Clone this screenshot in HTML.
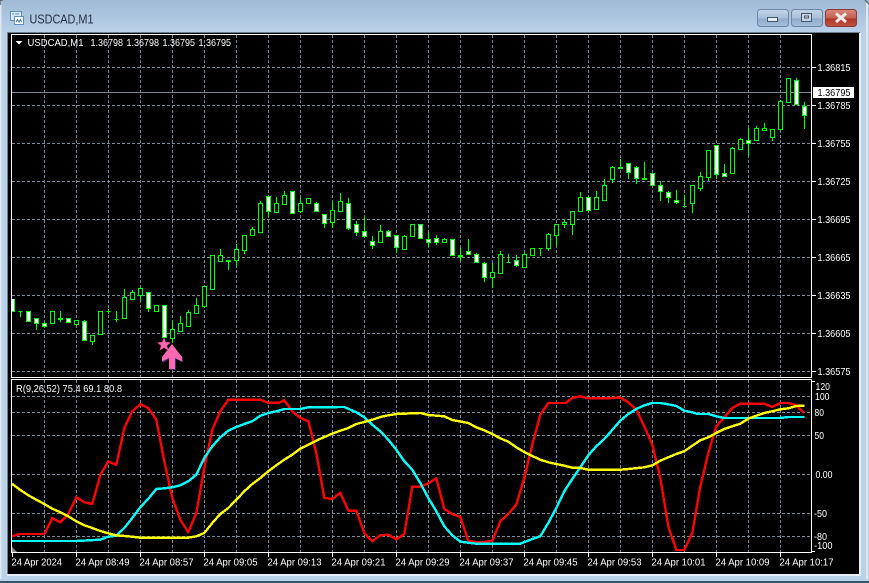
<!DOCTYPE html>
<html>
<head>
<meta charset="utf-8">
<title>USDCAD,M1</title>
<style>
html,body{margin:0;padding:0;background:#b9d2ea;}
svg{display:block;}
text{font-family:"Liberation Sans",sans-serif;font-size:10.5px;fill:#fff;}
</style>
</head>
<body>
<svg xmlns="http://www.w3.org/2000/svg" width="869" height="583" viewBox="0 0 869 583">
<defs>
<linearGradient id="tb" x1="0" y1="0" x2="0" y2="1"><stop offset="0" stop-color="#a0bad6"/><stop offset="1" stop-color="#bad2e9"/></linearGradient>
<linearGradient id="btn" x1="0" y1="0" x2="0" y2="1"><stop offset="0" stop-color="#c3d5e8"/><stop offset=".5" stop-color="#a9c0da"/><stop offset=".55" stop-color="#8fabcb"/><stop offset="1" stop-color="#a6c0db"/></linearGradient>
<linearGradient id="cls" x1="0" y1="0" x2="0" y2="1"><stop offset="0" stop-color="#d98a80"/><stop offset=".5" stop-color="#c4604f"/><stop offset=".55" stop-color="#ad3525"/><stop offset="1" stop-color="#c25344"/></linearGradient>
</defs>

<!-- window frame -->
<rect width="869" height="583" fill="#b9d2ea"/>
<rect width="869" height="34" fill="url(#tb)"/>
<path d="M0 5V1.5Q0 0 3 0" fill="none" stroke="#555"/>
<rect x="0" y="5" width="1.5" height="574" fill="#dfe8f1"/>
<rect x="866" y="3" width="2" height="576" fill="#dfe8f1"/>
<rect x="0" y="581" width="869" height="2" fill="#2f5a6a"/>
<path d="M865 0L869 4" stroke="#555" fill="none"/>

<!-- app icon -->
<rect x="10.5" y="11.5" width="11" height="9" fill="#dbe9f7" stroke="#5c8fc6"/>
<rect x="14.5" y="16.5" width="9" height="8" fill="#fff" stroke="#5c8fc6"/>
<path d="M12 14h2M15 14h4" stroke="#5c8fc6"/>
<path d="M16 22l1.500-2.500 1.500 2.500 1.500-2.500 1 2.500" stroke="#3a6fa8" fill="none" stroke-width=".9"/>

<!-- title -->
<text x="29.500" y="23.500" textLength="64" lengthAdjust="spacingAndGlyphs" style="font-size:12.500px;fill:#26303f">USDCAD,M1</text>

<!-- buttons -->
<rect x="757.500" y="9.500" width="31" height="17" rx="3" fill="url(#btn)" stroke="#6c86a6"/>
<rect x="767.500" y="17.500" width="10" height="4" fill="#e8edf3" stroke="#44556c"/>
<rect x="791.500" y="9.500" width="31" height="17" rx="3" fill="url(#btn)" stroke="#6c86a6"/>
<rect x="801.500" y="13.500" width="10" height="8" fill="#c6d4e3" stroke="#44556c"/>
<rect x="804" y="15.500" width="5" height="3" fill="#44556c"/>
<rect x="805" y="16.500" width="3" height="1" fill="#e8edf3"/>
<rect x="825.500" y="9.500" width="31" height="17" rx="3" fill="url(#cls)" stroke="#8a3b34"/>
<path d="M836 13.500L846 22M846 13.500L836 22" stroke="#f4ece8" stroke-width="3"/>

<!-- client -->
<rect x="7" y="32" width="853" height="542" fill="#000"/>
<rect x="7" y="32" width="853" height="1" fill="#6f7f8f"/>
<rect x="7" y="32" width="1" height="542" fill="#6f7f8f"/>
<rect x="859" y="33" width="2" height="542" fill="#e6eef6"/>
<rect x="7" y="574" width="854" height="2" fill="#e6eef6"/>

<g shape-rendering="crispEdges">
<!-- grid main -->
<g stroke="#778899" fill="none" stroke-dasharray="3 2">
<path d="M12 67.500H811M12 105.500H811M12 143.500H811M12 181.500H811M12 219.500H811M12 257.500H811M12 295.500H811M12 333.500H811M12 371.500H811"/>
<path d="M44.500 35V377M76.500 35V377M108.500 35V377M140.500 35V377M172.500 35V377M204.500 35V377M236.500 35V377M268.500 35V377M300.500 35V377M332.500 35V377M364.500 35V377M396.500 35V377M428.500 35V377M460.500 35V377M492.500 35V377M524.500 35V377M556.500 35V377M588.500 35V377M620.500 35V377M652.500 35V377M684.500 35V377M716.500 35V377M748.500 35V377M780.500 35V377"/>
<!-- grid indicator -->
<path d="M12 396.500H811M12 412.500H811M12 435.500H811M12 474.500H811M12 513.500H811M12 536.500H811"/>
<path d="M44.500 380V552M76.500 380V552M108.500 380V552M140.500 380V552M172.500 380V552M204.500 380V552M236.500 380V552M268.500 380V552M300.500 380V552M332.500 380V552M364.500 380V552M396.500 380V552M428.500 380V552M460.500 380V552M492.500 380V552M524.500 380V552M556.500 380V552M588.500 380V552M620.500 380V552M652.500 380V552M684.500 380V552M716.500 380V552M748.500 380V552M780.500 380V552"/>
</g>
<!-- price line -->
<path d="M12 92.500H811" stroke="#778899"/>

<!-- wicks -->
<path stroke="#00ff00" fill="none" d="M20.500 311V317M36.500 318V330M44.500 322V328M52.500 311V324M60.500 311V322M68.500 318V323M84.500 320V340M92.500 335V345M108.500 309V314M116.500 311V322M124.500 289V319M132.500 290V300M140.500 287V301M148.500 292V312M156.500 305V312M172.500 321V343M180.500 316V331M188.500 310V327M196.500 298V313M220.500 249V261M228.500 260V270M236.500 244V266M244.500 235V254M252.500 227V235M260.500 201V232M268.500 196V217M276.500 197V212M284.500 191V204M300.500 197V213M308.500 198V204M316.500 202V211M324.500 214V228M332.500 202V228M340.500 193V212M348.500 198V230M356.500 221V236M364.500 217V236M372.500 236V249M380.500 225V242M388.500 230V236M396.500 235V253M404.500 235V249M428.500 232V247M436.500 235V245M444.500 238V242M460.500 248V261M468.500 239V254M476.500 253V262M484.500 262V282M492.500 263V288M500.500 251V273M508.500 254V263M516.500 255V267M524.500 253V267M540.500 248V256M548.500 233V251M556.500 224V246M564.500 220V228M572.500 211V235M580.500 192V211M588.500 197V211M596.500 191V209M604.500 179V200M612.500 166V183M620.500 159V169M628.500 163V179M636.500 166V184M644.500 162V180M660.500 181V201M668.500 191V203M676.500 190V204M684.500 195V206M692.500 185V213M700.500 172V191M708.500 150V181M716.500 145V179M724.500 164V177M732.500 147V173M740.500 138V149M748.500 128V156M756.500 126V140M764.500 123V130M772.500 129V141M780.500 100V129M796.500 78V104M804.500 102V129"/>

<!-- hollow bodies -->
<path stroke="#00ff00" fill="#000" d="M50.500 311.500h4v12h-4zM74.500 320.500h4v4h-4zM90.500 335.500h4v6h-4zM98.500 311.500h4v23h-4zM122.500 297.500h4v21h-4zM130.500 292.500h4v7h-4zM138.500 288.500h4v7h-4zM154.500 305.500h4v6h-4zM170.500 329.500h4v9h-4zM178.500 323.500h4v8h-4zM186.500 312.500h4v14h-4zM194.500 305.500h4v8h-4zM202.500 286.500h4v20h-4zM210.500 255.500h4v34h-4zM218.500 255.500h4v6h-4zM234.500 249.500h4v11h-4zM242.500 235.500h4v15h-4zM250.500 229.500h4v6h-4zM258.500 203.500h4v29h-4zM274.500 203.500h4v9h-4zM282.500 195.500h4v9h-4zM298.500 203.500h4v8h-4zM306.500 198.500h4v5h-4zM330.500 210.500h4v12h-4zM338.500 201.500h4v10h-4zM378.500 231.500h4v11h-4zM402.500 236.500h4v13h-4zM410.500 224.500h4v12h-4zM442.500 239.500h4v3h-4zM490.500 272.500h4v5h-4zM498.500 254.500h4v19h-4zM522.500 254.500h4v13h-4zM530.500 248.500h4v7h-4zM546.500 234.500h4v14h-4zM554.500 224.500h4v11h-4zM562.500 222.500h4v2h-4zM570.500 211.500h4v13h-4zM578.500 197.500h4v14h-4zM594.500 197.500h4v12h-4zM602.500 185.500h4v15h-4zM610.500 167.500h4v12h-4zM690.500 185.500h4v18h-4zM698.500 176.500h4v12h-4zM706.500 150.500h4v27h-4zM730.500 148.500h4v25h-4zM738.500 139.500h4v10h-4zM754.500 128.500h4v12h-4zM762.500 128.500h4v2h-4zM770.500 129.500h4v8h-4zM778.500 101.500h4v28h-4zM786.500 78.500h4v24h-4z"/>

<!-- filled bodies -->
<path stroke="#00ff00" fill="#fff" d="M26.500 311.500h4v10h-4zM34.500 318.500h4v5h-4zM42.500 323.500h4v3h-4zM66.500 318.500h4v4h-4zM82.500 321.500h4v19h-4zM146.500 292.500h4v16h-4zM162.500 305.500h4v32h-4zM266.500 196.500h4v15h-4zM290.500 191.500h4v22h-4zM314.500 203.500h4v8h-4zM322.500 214.500h4v9h-4zM346.500 203.500h4v25h-4zM354.500 224.500h4v8h-4zM362.500 231.500h4v5h-4zM370.500 241.500h4v4h-4zM386.500 231.500h4v5h-4zM394.500 235.500h4v12h-4zM418.500 224.500h4v14h-4zM426.500 239.500h4v3h-4zM434.500 238.500h4v4h-4zM450.500 239.500h4v16h-4zM466.500 251.500h4v3h-4zM474.500 254.500h4v8h-4zM482.500 263.500h4v14h-4zM514.500 260.500h4v5h-4zM586.500 197.500h4v13h-4zM626.500 163.500h4v9h-4zM634.500 167.500h4v11h-4zM650.500 173.500h4v12h-4zM658.500 185.500h4v6h-4zM666.500 192.500h4v5h-4zM674.500 200.500h4v2h-4zM714.500 145.500h4v29h-4zM722.500 173.500h4v3h-4zM746.500 140.500h4v3h-4zM794.500 80.500h4v24h-4zM802.500 106.500h4v9h-4z"/>
<rect x="12" y="299" width="3" height="13" fill="#fff"/>
<path stroke="#00ff00" d="M12 311.500h3M14.500 299v13"/>

<!-- dojis -->
<path stroke="#00ff00" fill="#00ff00" d="M18.500 311.500h4M106.500 311.500h4M114.500 319.500h4M506.500 262.500h4M538.500 248.500h4M682.500 206.500h4M58.500 318.500h4v1h-4zM226.500 260.500h4v1h-4zM458.500 255.500h4v1h-4zM618.500 167.500h4v1h-4zM642.500 178.500h4v1h-4z"/>
</g>

<!-- star + arrow -->
<polygon points="164,338 165.800,342.300 170.500,342.600 166.900,345.600 168.100,350.200 164,347.700 159.900,350.200 161.100,345.600 157.500,342.600 162.200,342.300" fill="#ff69b4" stroke="#e0408c" stroke-width=".5"/>
<polygon points="172,345 183,358 183,362.500 176,359 176,370 170,370 170,359 163,362.500 162,358" fill="#3b2a7a"/>
<polygon points="172,344 182,357 182,361.500 175,358 175,369 169,369 169,358 162,361.500 162,357" fill="#ff69b4"/>

<!-- indicator lines -->
<g fill="none" stroke-width="2.400" stroke-linejoin="round" shape-rendering="crispEdges">
<polyline stroke="#ff0000" points="12,536.300 20,534 44.300,534 52.300,518.300 60.300,522.300 68.300,514 76.300,497.300 84.300,502.300 92.300,504 100.300,475 108.300,461.300 116.300,465 124.300,428 132.300,411.300 140.300,404.300 148.300,408 156.300,419.700 164.300,461.300 172.300,498 180.300,519.700 188.300,532.300 196.300,513 204.300,468 212.300,429.700 220.300,411.300 228.300,399.700 260.300,399.700 268.300,402.700 279,402.700 284.300,400.300 292.300,411.300 300.300,418 308.300,421.300 316.300,453 324.300,498 332.300,499 340.300,492.700 348.300,510.700 356.300,510.700 364.300,533 372.300,541.300 380.300,535.300 388.300,534.700 396.300,539.300 404.300,534 412.300,486.700 420.300,486.700 428.300,483.300 436.300,478.300 444.300,509 452.300,514 460.300,517 468.300,540.700 476.300,542 484.300,542 492.300,540.700 500.300,521.300 508.300,514 516.300,504.700 524.300,478 532.300,444.700 540.300,414.700 548.300,403 565.700,403 572.300,398 580.300,396.300 588.300,398.300 604.300,398.300 620.300,397.700 628.300,402.300 636.300,409.700 644.300,426.300 652.300,444.700 660.300,478 668.300,526.300 676.300,550 684.300,550 692.300,533 700.300,486.300 708.300,453 716.300,426.300 724.300,417.300 732.300,408 740.300,403.700 764.300,403.700 772.300,407 780.300,403 788.300,403 796.300,405.300 804.300,413"/>
<polyline stroke="#00ffff" points="12,541 76.300,541 100.300,539.700 108.300,536.700 116.300,535.700 124.300,528 132.300,518 140.300,507.300 148.300,498.700 156.300,489 164.300,488.300 172.300,487.300 180.300,485.300 188.300,481.300 196.300,474.700 204.300,458 212.300,446.300 220.300,437.300 228.300,430.700 236.300,427 244.300,424 252.300,421.300 260.300,415.700 268.300,413 276.300,411.300 284.300,409 300.300,409 308.300,407.300 344.300,407 356.300,412.300 364.300,417.300 372.300,424.700 380.300,431.300 388.300,439.700 396.300,449.700 404.300,461.300 412.300,469.700 420.300,483 428.300,498 436.300,511.300 444.300,526.300 452.300,535.300 460.300,541.700 476.300,543.700 520.300,543.700 532.300,539 540.300,536.300 548.300,523 556.300,508 564.300,491.300 572.300,479 580.300,467.300 588.300,455.300 596.300,446.300 604.300,439 620.300,420.700 628.300,414 636.300,409 644.300,405.300 652.300,403 660.300,403 668.300,404.300 676.300,406 684.300,410.700 692.300,412.300 697.700,414 708.300,414 716.300,416.300 724.300,418 780.300,418 788.300,417 804.300,417"/>
<polyline stroke="#ffff00" points="12,483.700 20,489.700 28.300,495.300 36.300,499.700 44.300,504 52.300,508.700 60.300,512.300 68.300,516.300 76.300,521.300 84.300,525.300 92.300,528 100.300,531 108.300,533.300 116.300,535.300 132.300,536.700 140.300,537.700 188.300,537.700 196.300,536.300 204.300,533 212.300,523 220.300,514 228.300,508 236.300,499.700 244.300,491.300 252.300,484 260.300,478 268.300,471.300 276.300,465.300 284.300,459.700 292.300,454.700 300.300,448.700 308.300,444.700 316.300,440.700 324.300,437 332.300,433.700 340.300,430.700 348.300,428 356.300,424 364.300,422 372.300,419.700 380.300,417 388.300,415.300 396.300,414 420.300,413 428.300,415 444.300,416.300 452.300,420 468.300,423 476.300,427.300 484.300,430.300 492.300,434 500.300,438.300 508.300,441.700 516.300,447.300 524.300,452 532.300,456 540.300,459.700 548.300,462.300 556.300,464 564.300,465.700 572.300,467.700 580.300,468 588.300,469.700 620.300,469.700 628.300,469 644.300,467.300 652.300,465.300 660.300,460.700 668.300,457.300 676.300,454 684.300,451.300 692.300,445.700 700.300,440.300 708.300,437.300 716.300,433 724.300,429 732.300,426.300 740.300,423.700 748.300,418.700 756.300,415.700 764.300,413 772.300,411.300 780.300,409.300 788.300,408.300 796.300,406 804.300,405.700"/>
</g>

<g shape-rendering="crispEdges">
<!-- cover lines overflow -->
<rect x="12" y="553" width="800" height="4" fill="#000"/>
<!-- chart borders -->
<rect x="11" y="34" width="801" height="1" fill="#fff"/>
<rect x="11" y="34" width="1" height="344" fill="#fff"/>
<rect x="811" y="34" width="1" height="344" fill="#fff"/>
<rect x="11" y="377" width="801" height="1" fill="#fff"/>
<rect x="11" y="379" width="801" height="1" fill="#fff"/>
<rect x="11" y="379" width="1" height="174" fill="#fff"/>
<rect x="811" y="379" width="1" height="174" fill="#fff"/>
<rect x="11" y="552" width="801" height="1" fill="#fff"/>
<!-- ticks price -->
<path stroke="#fff" d="M812 67.500h4M812 105.500h4M812 143.500h4M812 181.500h4M812 219.500h4M812 257.500h4M812 295.500h4M812 333.500h4M812 371.500h4M812 381.500h3M812 551.500h3"/>
<!-- ticks time -->
<path stroke="#fff" d="M12.500 553v4M76.500 553v4M140.500 553v4M204.500 553v4M268.500 553v4M332.500 553v4M396.500 553v4M460.500 553v4M524.500 553v4M588.500 553v4M652.500 553v4M716.500 553v4M780.500 553v4"/>
<!-- price tag -->
<rect x="813" y="87" width="41" height="11" fill="#fff"/>
</g>
<polygon points="12,547 17,552 12,552" fill="#8a8a8a"/>

<!-- header -->
<polygon points="15.500,41 22.500,41 19,44.500" fill="#fff"/>
<g>
<text x="27.500" y="46" textLength="56" lengthAdjust="spacingAndGlyphs">USDCAD,M1</text>
<text x="90.500" y="46" textLength="32.500" lengthAdjust="spacingAndGlyphs">1.36798</text>
<text x="126.500" y="46" textLength="32.500" lengthAdjust="spacingAndGlyphs">1.36798</text>
<text x="162.500" y="46" textLength="32.500" lengthAdjust="spacingAndGlyphs">1.36795</text>
<text x="198.500" y="46" textLength="32.500" lengthAdjust="spacingAndGlyphs">1.36795</text>
<text x="16" y="392" textLength="106" lengthAdjust="spacingAndGlyphs">R(9,26,52) 75.4 69.1 80.8</text>

<!-- price labels -->
<text x="817.500" y="71" textLength="33" lengthAdjust="spacingAndGlyphs">1.36815</text>
<text x="817.500" y="96" textLength="33" lengthAdjust="spacingAndGlyphs" style="fill:#000">1.36795</text>
<text x="817.500" y="109" textLength="33" lengthAdjust="spacingAndGlyphs">1.36785</text>
<text x="817.500" y="147" textLength="33" lengthAdjust="spacingAndGlyphs">1.36755</text>
<text x="817.500" y="185" textLength="33" lengthAdjust="spacingAndGlyphs">1.36725</text>
<text x="817.500" y="223" textLength="33" lengthAdjust="spacingAndGlyphs">1.36695</text>
<text x="817.500" y="261" textLength="33" lengthAdjust="spacingAndGlyphs">1.36665</text>
<text x="817.500" y="299" textLength="33" lengthAdjust="spacingAndGlyphs">1.36635</text>
<text x="817.500" y="337" textLength="33" lengthAdjust="spacingAndGlyphs">1.36605</text>
<text x="817.500" y="375" textLength="33" lengthAdjust="spacingAndGlyphs">1.36575</text>

<!-- indicator labels -->
<text x="815.500" y="390" textLength="14.500" lengthAdjust="spacingAndGlyphs">120</text>
<text x="815" y="400" textLength="14.500" lengthAdjust="spacingAndGlyphs">100</text>
<text x="814.500" y="416" textLength="9.500" lengthAdjust="spacingAndGlyphs">80</text>
<text x="814.500" y="439" textLength="9.500" lengthAdjust="spacingAndGlyphs">50</text>
<text x="815.500" y="478" textLength="17" lengthAdjust="spacingAndGlyphs">0.00</text>
<text x="814" y="517" textLength="13" lengthAdjust="spacingAndGlyphs">-50</text>
<text x="814" y="540" textLength="13" lengthAdjust="spacingAndGlyphs">-80</text>
<text x="814" y="549" textLength="18.500" lengthAdjust="spacingAndGlyphs">-100</text>

<!-- time labels -->
<text x="11.500" y="565.500" textLength="50.500" lengthAdjust="spacingAndGlyphs">24 Apr 2024</text>
<text x="75.500" y="565.500" textLength="54" lengthAdjust="spacingAndGlyphs">24 Apr 08:49</text>
<text x="139.500" y="565.500" textLength="54" lengthAdjust="spacingAndGlyphs">24 Apr 08:57</text>
<text x="203.500" y="565.500" textLength="54" lengthAdjust="spacingAndGlyphs">24 Apr 09:05</text>
<text x="267.500" y="565.500" textLength="54" lengthAdjust="spacingAndGlyphs">24 Apr 09:13</text>
<text x="331.500" y="565.500" textLength="54" lengthAdjust="spacingAndGlyphs">24 Apr 09:21</text>
<text x="395.500" y="565.500" textLength="54" lengthAdjust="spacingAndGlyphs">24 Apr 09:29</text>
<text x="459.500" y="565.500" textLength="54" lengthAdjust="spacingAndGlyphs">24 Apr 09:37</text>
<text x="523.500" y="565.500" textLength="54" lengthAdjust="spacingAndGlyphs">24 Apr 09:45</text>
<text x="587.500" y="565.500" textLength="54" lengthAdjust="spacingAndGlyphs">24 Apr 09:53</text>
<text x="651.500" y="565.500" textLength="54" lengthAdjust="spacingAndGlyphs">24 Apr 10:01</text>
<text x="715.500" y="565.500" textLength="54" lengthAdjust="spacingAndGlyphs">24 Apr 10:09</text>
<text x="779.500" y="565.500" textLength="54" lengthAdjust="spacingAndGlyphs">24 Apr 10:17</text>
</g>
</svg>
</body>
</html>
